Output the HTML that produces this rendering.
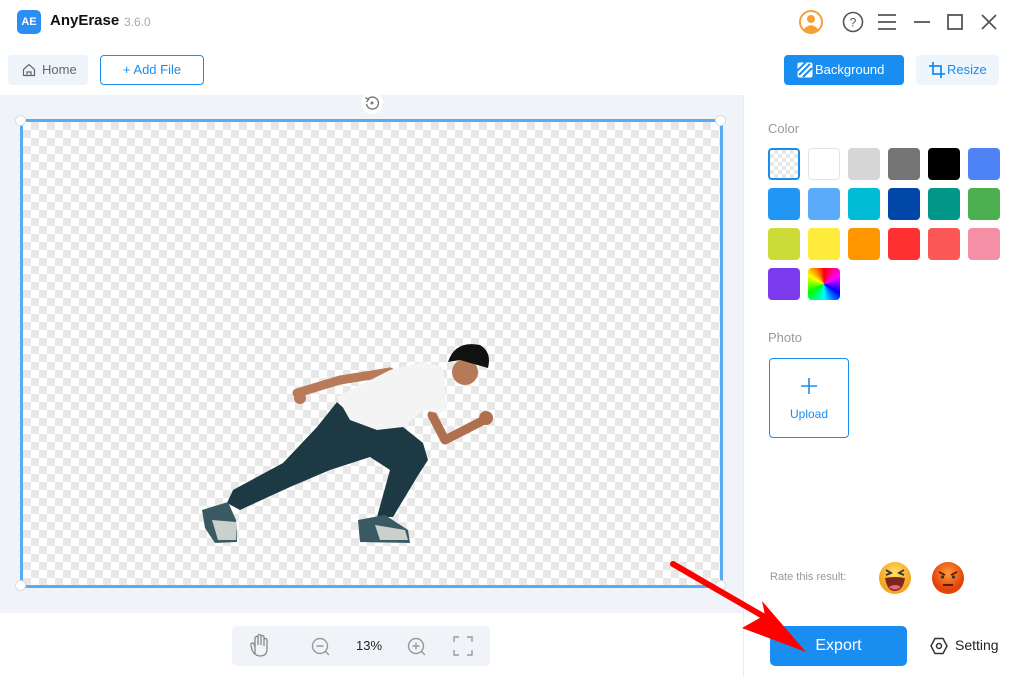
<!DOCTYPE html>
<html><head><meta charset="utf-8"><style>
*{box-sizing:border-box;margin:0;padding:0}
body{width:1023px;height:677px;overflow:hidden;background:#fff;font-family:"Liberation Sans",sans-serif;position:relative;color:#333}
.a{position:absolute}
.sw{position:absolute;width:32px;height:32px;border-radius:4px}
.chk{background-color:#fff;background-image:linear-gradient(45deg,#e8e8e8 25%,transparent 25%,transparent 75%,#e8e8e8 75%),linear-gradient(45deg,#e8e8e8 25%,transparent 25%,transparent 75%,#e8e8e8 75%);background-size:16px 16px;background-position:0 0,8px 8px}
</style></head><body>
<!-- title bar -->
<div class="a" style="left:17px;top:10px;width:24px;height:24px;border-radius:5px;background:#2b8ef3;color:#fff;font-weight:bold;font-size:11px;line-height:24px;text-align:center">AE</div>
<div class="a" style="left:50px;top:12px;font-size:15px;font-weight:bold;color:#111">AnyErase</div>
<div class="a" style="left:124px;top:15px;font-size:12px;color:#aaa">3.6.0</div>
<svg class="a" style="left:798px;top:9px" width="26" height="26" viewBox="0 0 26 26"><circle cx="13" cy="13" r="11" fill="none" stroke="#f7a035" stroke-width="2"/><circle cx="13" cy="10" r="4" fill="#f7a035"/><path d="M5.5 20.5 Q13 12 20.5 20.5 Q13 26 5.5 20.5Z" fill="#f7a035"/></svg>
<svg class="a" style="left:842px;top:11px" width="22" height="22" viewBox="0 0 22 22"><circle cx="11" cy="11" r="9.5" fill="none" stroke="#555" stroke-width="1.6"/><text x="11" y="15.5" font-size="12" text-anchor="middle" fill="#555" font-family="Liberation Sans">?</text></svg>
<svg class="a" style="left:877px;top:13px" width="20" height="18"><path d="M1 2H19M1 9H19M1 16H19" stroke="#555" stroke-width="1.8"/></svg>
<svg class="a" style="left:912px;top:13px" width="20" height="18"><path d="M2 9H18" stroke="#555" stroke-width="1.8"/></svg>
<svg class="a" style="left:946px;top:13px" width="18" height="18"><rect x="2" y="2" width="14" height="14" fill="none" stroke="#555" stroke-width="1.8"/></svg>
<svg class="a" style="left:980px;top:13px" width="18" height="18"><path d="M2 2L16 16M16 2L2 16" stroke="#555" stroke-width="1.8"/></svg>
<!-- toolbar -->
<div class="a" style="left:8px;top:55px;width:80px;height:30px;border-radius:4px;background:#eef4fb;font-size:13px;color:#666;line-height:30px;padding-left:34px">Home</div>
<svg class="a" style="left:22px;top:63px" width="14" height="14"><path d="M1.5 6.5L7 1.5L12.5 6.5V12.5H1.5Z M5 12.5V9H9V12.5" fill="none" stroke="#666" stroke-width="1.2"/></svg>
<div class="a" style="left:100px;top:55px;width:104px;height:30px;border:1px solid #1a8ef0;border-radius:4px;color:#1a8ef0;font-size:13px;line-height:28px;text-align:center">+ Add File</div>
<div class="a" style="left:784px;top:55px;width:120px;height:30px;border-radius:4px;background:#1a8ef0;color:#fff;font-size:13px;line-height:30px;padding-left:31px">Background</div>
<svg class="a" style="left:797px;top:62px" width="16" height="16"><rect x="0.5" y="0.5" width="15" height="15" rx="2" fill="#fff"/><path d="M2 13L13 2M6 15L15 6M0 9L9 0" stroke="#1a8ef0" stroke-width="2"/></svg>
<div class="a" style="left:916px;top:55px;width:83px;height:30px;border-radius:4px;background:#eef5fd;color:#1a8ef0;font-size:13px;line-height:30px;padding-left:31px">Resize</div>
<svg class="a" style="left:929px;top:62px" width="16" height="16"><path d="M4 0V12H16M0 4H12V16" fill="none" stroke="#1a8ef0" stroke-width="1.8"/></svg>
<!-- canvas -->
<div class="a" style="left:0;top:95px;width:743px;height:518px;background:#f0f3f8"></div>
<div class="a" style="left:743px;top:95px;width:1px;height:582px;background:#e8ebf0"></div>
<div class="a" style="left:361px;top:92px;width:22px;height:22px;border-radius:50%;background:#fff"></div>
<svg class="a" style="left:364px;top:95px" width="16" height="16"><path d="M4 4A6 6 0 1 1 2.5 9" fill="none" stroke="#777" stroke-width="1.4"/><path d="M1.5 2.5L4.5 4.5L2.5 7" fill="none" stroke="#777" stroke-width="1.4"/><circle cx="8" cy="8" r="1.5" fill="#777"/></svg>
<div class="a chk" style="left:20px;top:119px;width:703px;height:469px;border:3px solid #5aaaf5"></div>
<div class="a" style="left:15px;top:115px;width:11px;height:11px;border-radius:50%;background:#fff;border:1px solid #ddd"></div>
<div class="a" style="left:715px;top:115px;width:11px;height:11px;border-radius:50%;background:#fff;border:1px solid #ddd"></div>
<div class="a" style="left:15px;top:580px;width:11px;height:11px;border-radius:50%;background:#fff;border:1px solid #ddd"></div>
<div class="a" style="left:715px;top:580px;width:11px;height:11px;border-radius:50%;background:#fff;border:1px solid #ddd"></div>
<!-- person -->
<svg class="a" style="left:0;top:0" width="743" height="613">
<path d="M297 393L340 380L390 372" fill="none" stroke="#b97a5a" stroke-width="9" stroke-linecap="round"/>
<circle cx="300" cy="398" r="6" fill="#b97a5a"/>
<path d="M432 415L445 440L488 418" fill="none" stroke="#b07050" stroke-width="9" stroke-linecap="round" stroke-linejoin="round"/>
<circle cx="486" cy="418" r="7" fill="#b07050"/>
<polygon points="317,427 337,402 357,420 403,427 423,443 428,460 417,477 393,517 377,517 390,470 370,457 330,470 290,487 240,510 227,503 233,490 283,463" fill="#1d3a44"/>
<polygon points="337,397 390,370 423,362 443,367 447,410 437,413 423,410 403,427 377,430 350,420" fill="#f4f4f4"/>
<circle cx="465" cy="372" r="13" fill="#b57a58"/>
<path d="M448 362Q455 340 480 345Q492 352 488 368L460 360Z" fill="#111"/>
<path d="M202 510L228 502L236 520L237 542L215 543L205 528Z" fill="#3a5a63"/>
<path d="M212 520L236 522L236 540L218 540Z" fill="#ccd0cc"/>
<path d="M358 520L385 515L408 530L410 543L360 542Z" fill="#3a5a63"/>
<path d="M375 525L405 530L408 540L380 540Z" fill="#ccd0cc"/>
</svg>
<!-- bottom controls -->
<div class="a" style="left:232px;top:626px;width:258px;height:40px;border-radius:5px;background:#f0f3f8"></div>
<svg class="a" style="left:249px;top:634px" width="22" height="24"><path d="M6 20V9M6 12V4a1.5 1.5 0 0 1 3 0V11M9 10V2a1.5 1.5 0 0 1 3 0V11M12 10V3a1.5 1.5 0 0 1 3 0V12M15 11V6a1.5 1.5 0 0 1 3 0V15Q18 22 11 22Q6 22 3 16L2 11a1.5 1.5 0 0 1 3 -1L6 13" fill="none" stroke="#888" stroke-width="1.3"/></svg>
<svg class="a" style="left:310px;top:636px" width="22" height="22"><circle cx="10" cy="10" r="7.5" fill="none" stroke="#999" stroke-width="1.4"/><path d="M6.5 10H13.5M15.5 15.5L19 19" stroke="#999" stroke-width="1.4"/></svg>
<div class="a" style="left:356px;top:638px;font-size:13px;color:#222">13%</div>
<svg class="a" style="left:406px;top:636px" width="22" height="22"><circle cx="10" cy="10" r="7.5" fill="none" stroke="#999" stroke-width="1.4"/><path d="M6.5 10H13.5M10 6.5V13.5M15.5 15.5L19 19" stroke="#999" stroke-width="1.4"/></svg>
<svg class="a" style="left:453px;top:636px" width="20" height="20"><path d="M1 6V1H6M14 1H19V6M19 14V19H14M6 19H1V14" fill="none" stroke="#999" stroke-width="1.4"/></svg>
<!-- right panel -->
<div class="a" style="left:768px;top:121px;font-size:13px;color:#999">Color</div>
<div class="sw chk" style="left:768px;top:148px;border:2px solid #1a8ef0;background-size:8px 8px;background-position:0 0,4px 4px"></div>
<div class="sw" style="left:808px;top:148px;background:#fff;border:1px solid #e0e4ea"></div>
<div class="sw" style="left:848px;top:148px;background:#d6d6d6"></div>
<div class="sw" style="left:888px;top:148px;background:#757575"></div>
<div class="sw" style="left:928px;top:148px;background:#000"></div>
<div class="sw" style="left:968px;top:148px;background:#4e83f5"></div>
<div class="sw" style="left:768px;top:188px;background:#2196f3"></div>
<div class="sw" style="left:808px;top:188px;background:#5aacfb"></div>
<div class="sw" style="left:848px;top:188px;background:#00bcd4"></div>
<div class="sw" style="left:888px;top:188px;background:#0047a8"></div>
<div class="sw" style="left:928px;top:188px;background:#009688"></div>
<div class="sw" style="left:968px;top:188px;background:#4caf50"></div>
<div class="sw" style="left:768px;top:228px;background:#cddc39"></div>
<div class="sw" style="left:808px;top:228px;background:#ffeb3b"></div>
<div class="sw" style="left:848px;top:228px;background:#ff9800"></div>
<div class="sw" style="left:888px;top:228px;background:#ff3030"></div>
<div class="sw" style="left:928px;top:228px;background:#fd5656"></div>
<div class="sw" style="left:968px;top:228px;background:#f48fa5"></div>
<div class="sw" style="left:768px;top:268px;background:#7c3aed"></div>
<div class="sw" style="left:808px;top:268px;background:conic-gradient(from 0deg,red,magenta,blue,cyan,lime,yellow,red)"></div>
<div class="a" style="left:768px;top:330px;font-size:13px;color:#999">Photo</div>
<div class="a" style="left:769px;top:358px;width:80px;height:80px;border:1px solid #1a8ef0;border-radius:4px"></div>
<svg class="a" style="left:801px;top:378px" width="16" height="16"><path d="M8 0V16M0 8H16" stroke="#1a8ef0" stroke-width="1.6"/></svg>
<div class="a" style="left:769px;top:407px;width:80px;text-align:center;font-size:12px;color:#1a8ef0">Upload</div>
<div class="a" style="left:770px;top:571px;font-size:11px;color:#999">Rate this result:</div>
<svg class="a" style="left:878px;top:561px" width="34" height="34"><defs><radialGradient id="g1" cx="50%" cy="35%"><stop offset="0" stop-color="#ffe16a"/><stop offset="1" stop-color="#f5a623"/></radialGradient><radialGradient id="g2" cx="50%" cy="35%"><stop offset="0" stop-color="#ff9a3a"/><stop offset="1" stop-color="#e2440a"/></radialGradient></defs><circle cx="17" cy="17" r="16" fill="url(#g1)"/><path d="M8 9L13 12L8 14M26 9L21 12L26 14" fill="none" stroke="#333" stroke-width="1.8"/><path d="M7 17Q17 15 27 17Q25 30 17 30Q9 30 7 17Z" fill="#7a2a1a"/><path d="M11 26Q17 22 23 26Q17 31 11 26Z" fill="#f0608a"/></svg>
<svg class="a" style="left:931px;top:561px" width="34" height="34"><circle cx="17" cy="17" r="16" fill="url(#g2)"/><path d="M8 11L14 14M26 11L20 14" stroke="#5a1a00" stroke-width="1.8"/><circle cx="11.5" cy="16" r="1.6" fill="#333"/><circle cx="22.5" cy="16" r="1.6" fill="#333"/><path d="M12 24H22" stroke="#5a1a00" stroke-width="2"/></svg>
<div class="a" style="left:770px;top:626px;width:137px;height:40px;border-radius:5px;background:#1a8ef0;color:#fff;font-size:16px;line-height:40px;text-align:center">Export</div>
<svg class="a" style="left:930px;top:637px" width="18" height="18"><path d="M5 1.5H13L17 9L13 16.5H5L1 9Z" fill="none" stroke="#333" stroke-width="1.5"/><circle cx="9" cy="9" r="2.5" fill="none" stroke="#333" stroke-width="1.5"/></svg>
<div class="a" style="left:955px;top:637px;font-size:14px;color:#222">Setting</div>
<!-- red arrow -->
<svg class="a" style="left:0;top:0" width="1023" height="677"><path d="M673 564L775 623" stroke="#f00" stroke-width="6" stroke-linecap="round"/><polygon points="806,652 742,628 765,615 762,601" fill="#f00"/></svg>
</body></html>
